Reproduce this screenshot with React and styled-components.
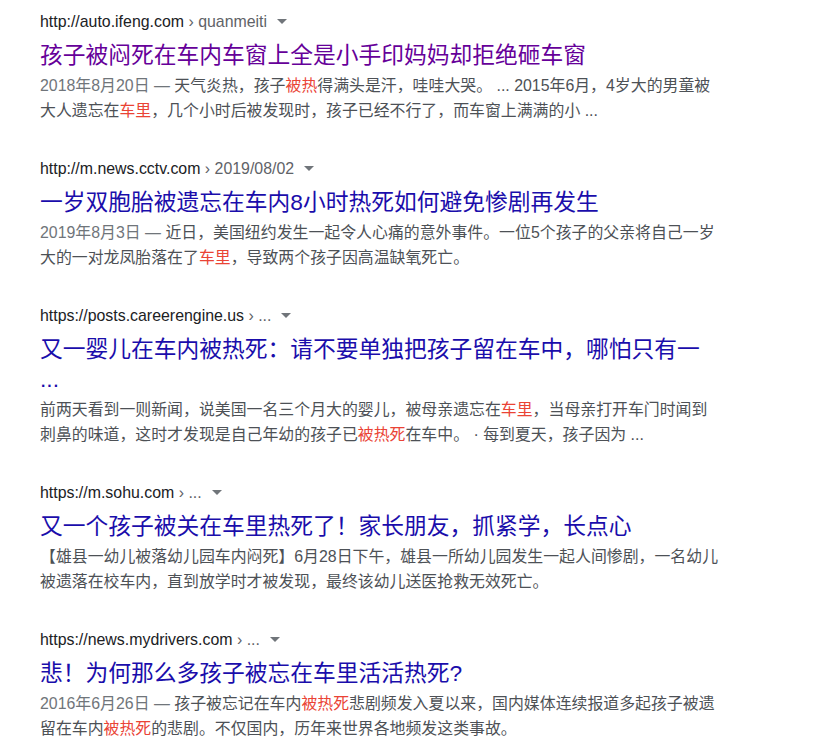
import React from "react";
import styled, { createGlobalStyle } from "styled-components";

const Global = createGlobalStyle`
  html, body { margin: 0; padding: 0; background: #fff; }
  body { font-family: "Liberation Sans", Arial, "Noto Sans CJK SC", sans-serif; }
`;

const Page = styled.div`
  padding: 11px 0 0 40px;
  display: flex;
  flex-direction: column;
  gap: 35.5px;
`;

const Result = styled.div`
  display: flex;
  flex-direction: column;
`;

const UrlRow = styled.div`
  display: flex;
  align-items: center;
  font-size: 15.9px;
  line-height: 21px;
  color: #202124;
  white-space: nowrap;
`;

const Crumb = styled.span`
  color: #5f6368;
`;

const Arrow = styled.svg`
  width: 10px;
  height: 5px;
  margin-left: 10px;
  fill: #70757a;
`;

const Title = styled.h3`
  margin: 8px 0 2.5px;
  font-weight: normal;
  font-size: 22.75px;
  line-height: 30px;
  color: ${(p) => (p.$visited ? "#660099" : "#1a0dab")};
  font-family: "Liberation Sans", Arial, "Noto Sans CJK SC", sans-serif;
  cursor: pointer;
`;

const Snippet = styled.div`
  font-size: 15.9px;
  line-height: 25px;
  color: #4d5156;
  white-space: nowrap;
`;

const Date = styled.span`
  color: #70757a;
`;

const Em = styled.em`
  font-style: normal;
  color: #ea4335;
`;

function Url({ host, crumb }) {
  return (
    <UrlRow>
      <span>{host}</span>
      <Crumb>&nbsp;› {crumb}</Crumb>
      <Arrow viewBox="0 0 10 5" aria-hidden="true">
        <path d="M0 0 L10 0 L5 5 Z" />
      </Arrow>
    </UrlRow>
  );
}

export default function App() {
  return (
    <>
      <Global />
      <Page>
        <Result>
          <Url host="http://auto.ifeng.com" crumb="quanmeiti" />
          <Title $visited>孩子被闷死在车内车窗上全是小手印妈妈却拒绝砸车窗</Title>
          <Snippet>
            <Date>2018年8月20日 — </Date>天气炎热，孩子<Em>被热</Em>得满头是汗，哇哇大哭。 ... 2015年6月，4岁大的男童被
            <br />
            大人遗忘在<Em>车里</Em>，几个小时后被发现时，孩子已经不行了，而车窗上满满的小 ...
          </Snippet>
        </Result>

        <Result>
          <Url host="http://m.news.cctv.com" crumb="2019/08/02" />
          <Title>一岁双胞胎被遗忘在车内8小时热死如何避免惨剧再发生</Title>
          <Snippet>
            <Date>2019年8月3日 — </Date>近日，美国纽约发生一起令人心痛的意外事件。一位5个孩子的父亲将自己一岁
            <br />
            大的一对龙凤胎落在了<Em>车里</Em>，导致两个孩子因高温缺氧死亡。
          </Snippet>
        </Result>

        <Result>
          <Url host="https://posts.careerengine.us" crumb="..." />
          <Title>
            又一婴儿在车内被热死：请不要单独把孩子留在车中，哪怕只有一
            <br />
            ...
          </Title>
          <Snippet>
            前两天看到一则新闻，说美国一名三个月大的婴儿，被母亲遗忘在<Em>车里</Em>，当母亲打开车门时闻到
            <br />
            刺鼻的味道，这时才发现是自己年幼的孩子已<Em>被热死</Em>在车中。 · 每到夏天，孩子因为 ...
          </Snippet>
        </Result>

        <Result>
          <Url host="https://m.sohu.com" crumb="..." />
          <Title>又一个孩子被关在车里热死了！家长朋友，抓紧学，长点心</Title>
          <Snippet>
            【雄县一幼儿被落幼儿园车内闷死】6月28日下午，雄县一所幼儿园发生一起人间惨剧，一名幼儿
            <br />
            被遗落在校车内，直到放学时才被发现，最终该幼儿送医抢救无效死亡。
          </Snippet>
        </Result>

        <Result>
          <Url host="https://news.mydrivers.com" crumb="..." />
          <Title>悲！为何那么多孩子被忘在车里活活热死?</Title>
          <Snippet>
            <Date>2016年6月26日 — </Date>孩子被忘记在车内<Em>被热死</Em>悲剧频发入夏以来，国内媒体连续报道多起孩子被遗
            <br />
            留在车内<Em>被热死</Em>的悲剧。不仅国内，历年来世界各地频发这类事故。
          </Snippet>
        </Result>
      </Page>
    </>
  );
}
